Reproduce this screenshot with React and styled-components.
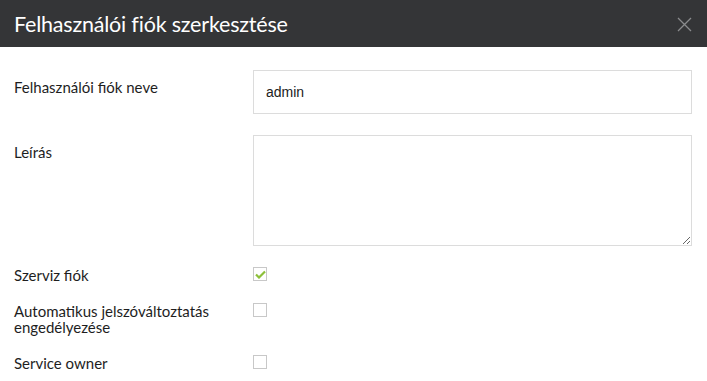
import React from "react";
import styled, { createGlobalStyle } from "styled-components";

const GlobalStyle = createGlobalStyle`
	html, body {
		margin: 0;
		padding: 0;
		background: #fff;
	}
	body {
		font-family: Lato, "Noto Sans", sans-serif;
		color: #1e1e1e;
	}
`;

const App = () => {
	return (
	<>
		<GlobalStyle />
		<Dialog>
			<Header>
				<Title>Felhasználói fiók szerkesztése</Title>
				<CloseButton aria-label="close">
					<svg width="15" height="15" viewBox="0 0 15 15">
						<path d="M1 1 L14 14 M14 1 L1 14" stroke="#8a8b8d" strokeWidth="1.3" fill="none" />
					</svg>
				</CloseButton>
			</Header>
			<Body>
				<FieldRow>
					<Label>Felhasználói fiók neve</Label>
					<TextInput defaultValue="admin" />
				</FieldRow>
				<FieldRow>
					<Label>Leírás</Label>
					<TextArea />
				</FieldRow>
				<CheckRow>
					<CheckLabel>Szerviz fiók</CheckLabel>
					<Check checked />
				</CheckRow>
				<CheckRow>
					<CheckLabel>Automatikus jelszóváltoztatás engedélyezése</CheckLabel>
					<Check />
				</CheckRow>
				<CheckRow>
					<CheckLabel>Service owner</CheckLabel>
					<Check />
				</CheckRow>
			</Body>
		</Dialog>
	</>
	);
};

const Check = ({ checked }) => (
	<CheckBox>
		{checked && (
			<svg width="11" height="9" viewBox="0 0 11 9">
				<path d="M1 4.5 L4 7.5 L10 1.5" stroke="#8dc03a" strokeWidth="2.2" fill="none" />
			</svg>
		)}
	</CheckBox>
);

const Dialog = styled.div`
	width: 707px;
	height: 381px;
	overflow: hidden;
`;

const Header = styled.div`
	display: flex;
	align-items: center;
	justify-content: space-between;
	height: 47px;
	padding: 0 15px 0 14px;
	background: #343537;
`;

const Title = styled.h1`
	margin: 0;
	font-size: 21.5px;
	font-weight: 400;
	color: #fff;
	letter-spacing: -0.2px;
`;

const CloseButton = styled.div`
	display: flex;
	width: 15px;
	height: 15px;
	margin-top: 1px;
`;

const Body = styled.div`
	padding: 23px 15px 0 14px;
`;

const FieldRow = styled.div`
	display: grid;
	grid-template-columns: 239px 1fr;
	margin-bottom: 21px;
`;

const Label = styled.label`
	padding-top: 9px;
	font-size: 15px;
	line-height: 16px;
`;

const TextInput = styled.input`
	box-sizing: border-box;
	height: 44px;
	padding: 0 12px;
	border: 1px solid #dcdcdc;
	font-family: "Liberation Sans", Arial, sans-serif;
	font-size: 14px;
	color: #222;
	outline: none;
`;

const TextArea = styled.textarea`
	box-sizing: border-box;
	height: 111px;
	border: 1px solid #dcdcdc;
	resize: vertical;
	outline: none;
	display: block;
`;

const CheckRow = styled.div`
	display: grid;
	grid-template-columns: 239px 1fr;
	align-items: start;
	margin-bottom: 20px;
`;

const CheckLabel = styled.div`
	font-size: 15px;
	line-height: 16px;
	padding-right: 14px;
`;

const CheckBox = styled.span`
	box-sizing: border-box;
	display: flex;
	align-items: center;
	justify-content: center;
	width: 14px;
	height: 14px;
	border: 1px solid #c8c8c8;
	background: #fff;
`;

export default App;
